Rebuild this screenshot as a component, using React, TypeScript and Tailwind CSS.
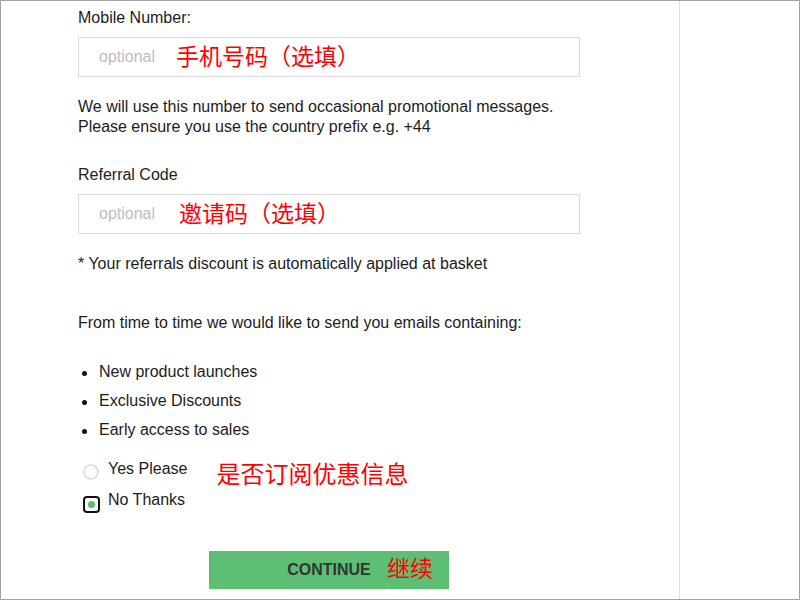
import React from "react";

export default function App() {
  const red = "text-[#ff0000] text-[23px] leading-[26px] [font-family:'Noto_Sans_CJK_SC','Noto_Sans',sans-serif]";
  return (
    <div className="w-[800px] h-[600px] box-border border border-[#a3a3a3] bg-white flex overflow-hidden text-[16px] leading-[20px] text-[#1c1c1c] [font-family:'Liberation_Sans',Arial,sans-serif]">
      <div className="w-[678px] h-full pl-[77px] pt-[7px]">
        <div>Mobile Number:</div>
        <div className="mt-[9px] w-[502px] h-[40px] border border-[#dcdcdc] flex items-center pl-[20px]">
          <span className="text-[#bdbdbd]">optional</span>
          <span className={`ml-[21px] mb-[4px] ${red}`}>手机号码（选填）</span>
        </div>
        <div className="mt-[20px]">
          We will use this number to send occasional promotional messages.
          <br />
          Please ensure you use the country prefix e.g. +44
        </div>
        <div className="mt-[28px]">Referral Code</div>
        <div className="mt-[9px] w-[502px] h-[40px] border border-[#dcdcdc] flex items-center pl-[20px]">
          <span className="text-[#bdbdbd]">optional</span>
          <span className={`ml-[24px] mb-[4px] ${red}`}>邀请码（选填）</span>
        </div>
        <div className="mt-[20px]">* Your referrals discount is automatically applied at basket</div>
        <div className="mt-[39px]">From time to time we would like to send you emails containing:</div>
        <ul className="mt-[29px] flex flex-col gap-[9px]">
          {["New product launches", "Exclusive Discounts", "Early access to sales"].map((t) => (
            <li key={t} className="flex items-center h-[20px]">
              <span className="w-[21px] flex items-center">
                <span className="ml-[4px] mt-[2px] w-[5px] h-[5px] rounded-full bg-[#111]" />
              </span>
              <span>{t}</span>
            </li>
          ))}
        </ul>
        <div className="mt-[19px] flex items-start">
          <div className="flex flex-col gap-[11px]">
            <div className="flex h-[20px]">
              <span className="ml-[5px] mt-[5px] w-[16px] h-[16px] rounded-full border-2 border-[#e2e2e2] box-border" />
              <span className="ml-[9px]">Yes Please</span>
            </div>
            <div className="flex h-[20px]">
              <span className="ml-[5px] mt-[6px] w-[17px] h-[17px] rounded-[4px] border-2 border-[#111] box-border flex items-center justify-center">
                <span className="w-[7px] h-[7px] rounded-full bg-[#5cbf74]" />
              </span>
              <span className="ml-[8px]">No Thanks</span>
            </div>
          </div>
          <span className="ml-[29px] text-[#ff0000] text-[24px] leading-[28px] [font-family:'Noto_Sans_CJK_SC','Noto_Sans',sans-serif]">
            是否订阅优惠信息
          </span>
        </div>
        <div className="mt-[41px] ml-[131px] relative w-[240px] h-[38px] bg-[#5cbf74] flex items-center justify-center">
          <span className="font-bold text-[#333] text-[16px]">CONTINUE</span>
          <span className={`absolute left-[178px] top-[3px] ${red}`}>继续</span>
        </div>
      </div>
      <div className="flex-1 h-full border-l border-[#dedede]" />
    </div>
  );
}
